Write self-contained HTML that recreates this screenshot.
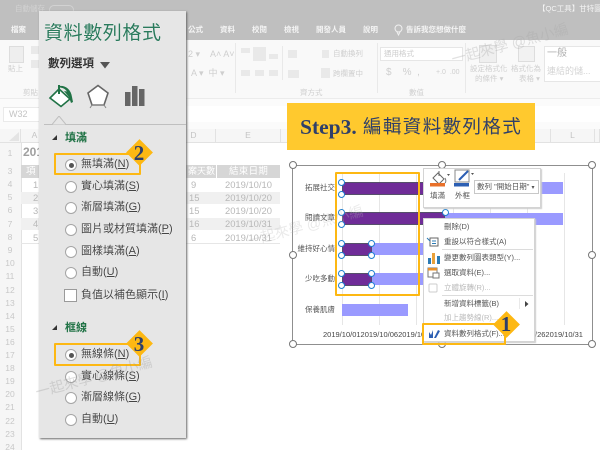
<!DOCTYPE html>
<html><head><meta charset="utf-8">
<style>
html,body{margin:0;padding:0;background:#fff}
#r{position:relative;width:600px;height:450px;overflow:hidden;background:#fff;font-family:"Liberation Sans","Noto Sans CJK TC",sans-serif}
#r div{position:absolute;white-space:nowrap}
.g{color:#f4f4f4;font-size:7.5px;line-height:12px;font-weight:bold}
.rb{color:#cfcfcf;font-size:7.5px;line-height:12px}
.sh{background:#e9e9e9}
.h{background:#f6f6f6;border-right:1px solid #e2e2e2;border-bottom:1px solid #e2e2e2;box-sizing:border-box;color:#c4c4c4;font-size:8.5px;text-align:center;line-height:13px}
.c{color:#b8b8b8;font-size:9.4px;line-height:13px}
.n{color:#c8c8c8;font-size:8.5px;width:20px;text-align:center;left:0;line-height:13px}
.o{color:#444;font-size:11px;line-height:15px;left:81px;text-shadow:0 0 1px #fff}
.rd{width:10px;height:10px;border:1px solid #a5a5a5;border-radius:50%;background:#fff;left:65px}
.rd.on:after{content:"";position:absolute;left:2.5px;top:2.5px;width:5px;height:5px;background:#555;border-radius:50%}
.y{border:2px solid #fdb813;box-sizing:border-box;border-radius:1px}
.d{width:19px;height:19px;background:#fdb813;transform:rotate(45deg)}
.num{color:#2f3f69;font:bold 21px/20px "Liberation Serif",serif;width:20px;text-align:center}
.m{color:#555;font-size:7.5px;line-height:12px;left:444px}
.ms{background:#dcdcdc;height:1px;left:442px;width:91px}
.p{background:#6f2c98;height:13px;border:1px solid #55506a;box-sizing:border-box}
.b{background:#9a9aff;height:12px}
.hd{width:5px;height:5px;border:1px solid #1f7fd0;background:#fff;border-radius:50%}
.ch{width:6px;height:6px;border:1px solid #777;background:#fff;border-radius:50%}
.gl{width:1px;background:#e6e6e6;top:173px;height:152px}
.lb{color:#555;font-size:7.5px;line-height:12px;text-align:right;width:41px;left:294px}
.ax{color:#444;font-size:7.5px;line-height:11px}
.wm{font-size:14.5px;line-height:20px;transform:rotate(-15deg)}
</style></head><body>
<div id="r">
<!-- title bar -->
<div style="left:0;top:0;width:600px;height:40px;background:#bfbfbf"></div>
<div class="g" style="left:15px;top:3px;color:#d2d2d2;font-weight:normal">自動儲存</div>
<div style="left:49px;top:5px;width:23px;height:8px;border:1px solid #d2d2d2;border-radius:5px"></div>
<div class="g" style="left:538px;top:3px;font-size:7.5px;font-weight:normal">【QC工具】甘特圖</div>
<div class="g" style="left:11px;top:24px">檔案</div>
<div class="g" style="left:188px;top:24px">公式</div>
<div class="g" style="left:220px;top:24px">資料</div>
<div class="g" style="left:252px;top:24px">校閱</div>
<div class="g" style="left:284px;top:24px">檢視</div>
<div class="g" style="left:316px;top:24px">開發人員</div>
<div class="g" style="left:363px;top:24px">說明</div>
<svg style="position:absolute;left:394px;top:24px" width="9" height="12"><circle cx="4.500" cy="4.500" r="3.500" fill="none" stroke="#f0f0f0"/><path d="M3 8l1.500 3L6 8" fill="none" stroke="#f0f0f0"/></svg>
<div class="g" style="left:406px;top:24px">告訴我您想做什麼</div>
<!-- ribbon -->
<div style="left:0;top:40px;width:600px;height:58px;background:#f9f9f9;border-bottom:1px solid #ececec"></div>
<div class="rb" style="left:8px;top:63px">貼上</div>
<div class="rb" style="left:23px;top:87px">剪貼</div>
<div style="left:9px;top:46px;width:13px;height:15px;background:#eee;border:1px solid #ddd"></div>
<div class="sh" style="left:31px;top:46px;width:8px;height:8px"></div>
<div class="sh" style="left:31px;top:60px;width:8px;height:8px"></div>
<div class="rb" style="left:188px;top:48px;font-size:9px">2 ▾</div>
<div class="rb" style="left:210px;top:48px;font-size:9px">A˄ A˅</div>
<div class="rb" style="left:191px;top:67px;font-size:9px">A ▾ &nbsp;中 ▾</div>
<div class="sh" style="left:241px;top:48px;width:9px;height:5px"></div><div class="sh" style="left:253px;top:47px;width:13px;height:14px"></div><div class="sh" style="left:269px;top:54px;width:9px;height:5px"></div>
<div class="sh" style="left:241px;top:70px;width:9px;height:6px"></div><div class="sh" style="left:255px;top:70px;width:9px;height:6px"></div><div class="sh" style="left:269px;top:70px;width:9px;height:6px"></div>
<div class="sh" style="left:235px;top:43px;width:1px;height:50px"></div>
<div class="sh" style="left:282px;top:46px;width:1px;height:34px"></div>
<div class="sh" style="left:377px;top:43px;width:1px;height:50px"></div>
<div class="sh" style="left:465px;top:43px;width:1px;height:50px"></div>
<div class="sh" style="left:288px;top:50px;width:9px;height:8px"></div><div class="sh" style="left:288px;top:70px;width:11px;height:8px"></div>
<div class="sh" style="left:322px;top:50px;width:7px;height:8px"></div><div class="sh" style="left:321px;top:68px;width:9px;height:10px"></div>
<div class="rb" style="left:300px;top:87px">齊方式</div>
<div class="rb" style="left:409px;top:87px">數值</div>
<div class="rb" style="left:333px;top:48px">自動換列</div>
<div class="rb" style="left:333px;top:68px">跨欄置中</div>
<div style="left:380px;top:47px;width:81px;height:12px;background:#fff;border:1px solid #e6e6e6;color:#ccc;font-size:7.5px;line-height:12px;text-indent:3px">通用格式</div>
<div class="rb" style="left:386px;top:67px;font-size:10px">$ &nbsp; &nbsp;% &nbsp;,</div>
<div class="rb" style="left:436px;top:67px;font-size:7px">+.0 &nbsp;.00</div>
<div class="rb" style="left:470px;top:63px">設定格式化</div>
<div class="rb" style="left:475px;top:73px">的條件 ▾</div>
<div class="rb" style="left:511px;top:63px">格式化為</div>
<div class="rb" style="left:519px;top:73px">表格 ▾</div>
<div style="left:479px;top:45px;width:16px;height:16px;background:#efefef;border:1px solid #ddd"></div>
<div style="left:518px;top:46px;width:15px;height:14px;background:#f2f2f2;border:1px solid #ddd"></div>
<div style="left:544px;top:46px;width:60px;height:34px;background:#fff;border:1px solid #e6e6e6"></div>
<div style="left:547px;top:47px;color:#b0b0b0;font-size:10px;line-height:14px">一般</div>
<div style="left:547px;top:64px;color:#d4d4d4;font-size:9px;line-height:14px">連結的儲...</div>
<div class="wm" style="left:450px;top:35px;color:rgba(170,170,170,.35)">一起來學 @魚小編</div>
<!-- formula bar -->
<div style="left:0;top:99px;width:600px;height:30px;background:#fbfbfb"></div>
<div style="left:3px;top:107px;width:36px;height:13px;background:#fff;border:1px solid #eaeaea;color:#c4c4c4;font-size:9px;line-height:13px;text-indent:5px">W32</div>
<div style="left:186px;top:106px;width:414px;height:16px;background:#fff"></div>
<!-- col headers -->
<div class="h" style="left:0;top:129px;width:21px;height:14px"></div>
<div class="h" style="left:21px;top:129px;width:28px;height:14px">A</div>
<div class="h" style="left:49px;top:129px;width:123px;height:14px"></div>
<div class="h" style="left:172px;top:129px;width:44px;height:14px">D</div>
<div class="h" style="left:216px;top:129px;width:65px;height:14px">E</div>
<div class="h" style="left:281px;top:129px;width:270px;height:14px"></div>
<div class="h" style="left:551px;top:129px;width:44px;height:14px">L</div>
<div class="h" style="left:595px;top:129px;width:5px;height:14px"></div>
<svg style="position:absolute;left:8px;top:131px" width="12" height="11"><path d="M11 1v9H1z" fill="#e4e4e4"/></svg>
<!-- row headers -->
<div style="left:0;top:143px;width:21px;height:307px;background:#f6f6f6;border-right:1px solid #e2e2e2"></div>
<div class="n" style="top:147px">1</div><div class="n" style="top:165px">3</div><div class="n" style="top:178px">4</div><div class="n" style="top:191px">5</div><div class="n" style="top:204px">6</div><div class="n" style="top:218px">7</div><div class="n" style="top:231px">8</div><div class="n" style="top:244px">9</div><div class="n" style="top:257px">10</div><div class="n" style="top:270px">11</div><div class="n" style="top:284px">12</div><div class="n" style="top:297px">13</div><div class="n" style="top:310px">14</div><div class="n" style="top:323px">15</div><div class="n" style="top:336px">16</div><div class="n" style="top:349px">17</div><div class="n" style="top:362px">18</div><div class="n" style="top:375px">19</div><div class="n" style="top:388px">20</div><div class="n" style="top:401px">21</div><div class="n" style="top:415px">22</div><div class="n" style="top:428px">23</div><div class="n" style="top:441px">24</div>
<!-- sheet -->
<div style="left:23px;top:144px;color:#a0a0a0;font-size:12px;font-weight:bold;line-height:16px">201</div>
<div style="left:21px;top:165px;width:259px;height:13px;background:#d6d6d6"></div>
<div style="left:216px;top:165px;width:1px;height:13px;background:#fff"></div>
<div style="left:188px;top:165px;color:#fff;font-size:9px;line-height:13px">案天數</div>
<div style="left:229px;top:165px;color:#fff;font-size:9.500px;line-height:13px;letter-spacing:.3px">結束日期</div>
<div style="left:26px;top:165px;color:#fff;font-size:9.500px;line-height:13px">項</div>
<div style="left:21px;top:192px;width:259px;height:12px;background:#f0f0f0"></div>
<div style="left:21px;top:218px;width:259px;height:12px;background:#f0f0f0"></div>
<div style="left:21px;top:243px;width:259px;height:1px;background:#e6e6e6"></div>
<div class="c" style="left:33px;top:178px">1</div><div class="c" style="left:33px;top:191px">2</div><div class="c" style="left:33px;top:204px">3</div><div class="c" style="left:33px;top:217px">4</div><div class="c" style="left:33px;top:231px">5</div>
<div class="c" style="left:191px;top:178px">9</div><div class="c" style="left:189px;top:191px">15</div><div class="c" style="left:189px;top:204px">15</div><div class="c" style="left:189px;top:217px">16</div><div class="c" style="left:191px;top:231px">6</div>
<div class="c" style="left:225px;top:178px">2019/10/10</div><div class="c" style="left:225px;top:191px">2019/10/20</div><div class="c" style="left:225px;top:204px">2019/10/20</div><div class="c" style="left:225px;top:217px">2019/10/31</div><div class="c" style="left:225px;top:231px">2019/10/31</div>
<!-- step banner -->
<div style="left:287px;top:103px;width:248px;height:47px;background:#ffc92e"></div>
<div style="left:300px;top:115px;color:#2f3f69;font-size:21.500px;line-height:24px;font-weight:bold;font-family:'Liberation Serif',serif">Step3.</div>
<div style="left:363px;top:115px;color:#2f3f69;font-size:18.500px;line-height:24px;letter-spacing:1.400px">編輯資料數列格式</div>
<!-- chart -->
<div style="left:292px;top:165px;width:301px;height:180px;background:#fff;border:1.500px solid #8f8f8f;box-sizing:border-box"></div>
<div class="gl" style="left:342px"></div><div class="gl" style="left:379px"></div><div class="gl" style="left:416px"></div><div class="gl" style="left:453px"></div><div class="gl" style="left:490px"></div><div class="gl" style="left:527px"></div><div class="gl" style="left:564px"></div>
<div class="lb" style="top:182px">拓展社交</div><div class="lb" style="top:212px">閱讀文章</div><div class="lb" style="top:243px">維持好心情</div><div class="lb" style="top:273px">少吃多動</div><div class="lb" style="top:304px">保養肌膚</div>
<div class="b" style="left:342px;top:182px;width:221px"></div>
<div class="b" style="left:342px;top:213px;width:221px"></div>
<div class="b" style="left:342px;top:243px;width:140px"></div>
<div class="b" style="left:342px;top:273px;width:140px"></div>
<div class="b" style="left:342px;top:304px;width:66px"></div>
<div class="p" style="left:342px;top:182px;width:103px"></div>
<div class="p" style="left:342px;top:212px;width:103px"></div>
<div class="p" style="left:342px;top:243px;width:30px"></div>
<div class="p" style="left:342px;top:273px;width:30px"></div>
<div class="ax" style="left:323px;top:329px">2019/10/012019/10/062019/10/11</div>
<div class="ax" style="left:535px;top:329px">/262019/10/31</div>
<div class="hd" style="left:338px;top:179px"></div><div class="hd" style="left:338px;top:191px"></div>
<div class="hd" style="left:338px;top:209px"></div><div class="hd" style="left:338px;top:221px"></div><div class="hd" style="left:442px;top:209px"></div>
<div class="hd" style="left:338px;top:240px"></div><div class="hd" style="left:338px;top:252px"></div><div class="hd" style="left:368px;top:240px"></div><div class="hd" style="left:368px;top:252px"></div>
<div class="hd" style="left:338px;top:270px"></div><div class="hd" style="left:338px;top:282px"></div><div class="hd" style="left:368px;top:270px"></div><div class="hd" style="left:368px;top:282px"></div>
<div class="ch" style="left:289px;top:161px"></div><div class="ch" style="left:438px;top:161px"></div><div class="ch" style="left:588px;top:161px"></div>
<div class="ch" style="left:289px;top:251px"></div><div class="ch" style="left:588px;top:251px"></div>
<div class="ch" style="left:289px;top:340px"></div><div class="ch" style="left:438px;top:340px"></div><div class="ch" style="left:588px;top:340px"></div>
<!-- mini toolbar -->
<div style="left:423px;top:168px;width:118px;height:40px;background:#fff;border:1px solid #d4d4d4;box-shadow:1px 1px 1px #ccc;box-sizing:border-box"></div>
<svg style="position:absolute;left:430px;top:169px" width="45" height="24" viewBox="0 0 45 24"><path d="M3 9 L8 4 L14 10 L9 15 Z" fill="#fff" stroke="#666" stroke-width="1"/><path d="M9 2v5" stroke="#666"/><path d="M15 9c1 2 1 4 0 5" stroke="#777" fill="none"/><rect x="0" y="14" width="15" height="3.500" fill="#e8702a"/><path d="M17 5h3l-1.500 2z" fill="#555"/><rect x="25" y="1" width="14" height="12" fill="#fff" stroke="#888"/><path d="M29 11L38 2" stroke="#2c5fb3" stroke-width="2"/><rect x="24" y="14" width="15" height="3.500" fill="#2c5fb3"/><path d="M41 4h3l-1.500 2z" fill="#555"/></svg>
<div class="m" style="left:430px;top:190px">填滿</div>
<div class="m" style="left:455px;top:190px">外框</div>
<div style="left:474px;top:180px;width:65px;height:14px;background:#fff;border:1px solid #c8c8c8;box-sizing:border-box;color:#555;font-size:7.500px;line-height:12px;text-indent:2px">數列 "開始日期" <span style="font-size:6px">▾</span></div>
<!-- context menu -->
<div style="left:423px;top:218px;width:112px;height:124px;background:#fff;border:1px solid #d4d4d4;box-shadow:1px 1px 1px #ccc;box-sizing:border-box"></div>
<div class="m" style="top:221px">刪除(D)</div>
<div class="m" style="top:236px">重設以符合樣式(A)</div>
<div class="ms" style="top:249px"></div>
<div class="m" style="top:252px">變更數列圖表類型(Y)...</div>
<div class="m" style="top:267px">選取資料(E)...</div>
<div class="m" style="top:282px;color:#bbb">立體旋轉(R)...</div>
<div class="ms" style="top:295px"></div>
<div class="m" style="top:298px">新增資料標籤(B)</div>
<div class="sh" style="left:519px;top:298px;width:1px;height:11px"></div>
<svg style="position:absolute;left:525px;top:301px" width="4" height="6"><path d="M0 0l3.500 3L0 6z" fill="#444"/></svg>
<div class="m" style="top:312px;color:#bbb">加上趨勢線(R)...</div>
<div class="m" style="top:328px">資料數列格式(F)...</div>
<svg style="position:absolute;left:426px;top:234px" width="16" height="112" viewBox="0 0 16 112"><rect x="4" y="4" width="8" height="8" fill="#fff" stroke="#666"/><path d="M1 4l3 3M6 7h4M6 9.500h4" stroke="#2c7bb5"/><rect x="2" y="24" width="3" height="6" fill="#2c7bb5"/><rect x="6" y="19" width="3" height="11" fill="#e9a13b"/><rect x="11" y="22" width="3" height="8" fill="#2c7bb5"/><rect x="2" y="34" width="9" height="9" fill="#fff" stroke="#777"/><rect x="2" y="34" width="9" height="2.500" fill="#e8902a"/><rect x="7" y="39" width="6" height="5" fill="#fff" stroke="#777"/><rect x="3" y="50" width="8" height="8" rx="1" fill="#fff" stroke="#ccc"/><path d="M3 104v-6l2 3 2-5v8zM8 104l4-8 2 1-4 7z" fill="#2c5fb3"/></svg>
<!-- highlight boxes -->
<div class="y" style="left:335px;top:172px;width:85px;height:124px"></div>
<div class="y" style="left:422px;top:323px;width:84px;height:22px"></div>
<div class="d" style="left:497px;top:315px"></div>
<div class="num" style="left:496px;top:314px">1</div>
<div class="wm" style="left:245px;top:217px;color:rgba(185,185,185,.3)">一起來學 @魚小編</div>
<!-- side panel -->
<div style="left:39px;top:11px;width:147px;height:427px;background:#e6e6e6;box-shadow:1px 1px 2px #666"></div>
<div style="left:44px;top:21px;color:#2a7a5c;font-size:19px;line-height:26px;letter-spacing:.6px;text-shadow:0 0 1px #fff">資料數列格式</div>
<div style="left:48px;top:56px;color:#333;font-size:11.500px;line-height:16px;font-weight:bold">數列選項</div>
<svg style="position:absolute;left:100px;top:62px" width="10" height="7"><path d="M0 0h10L5 6.500z" fill="#555"/></svg>
<svg style="position:absolute;left:45px;top:81px" width="105" height="30" viewBox="0 0 105 30"><path d="M5 17 L14 8 L25 18 L16 25.500 Z" fill="#fff" stroke="#217346" stroke-width="1.600"/><path d="M13 4h2v9h-2z" fill="#217346"/><path d="M14 5c6-1 12 3 13 11l1 5-2 1-2-6-5-6 3 .5c-2-3-5-4-8-4z" fill="#217346"/><path d="M43 12l10-7.500 10 7.500-4 12H47z" fill="#fff" stroke="#666" stroke-width="1.600"/><path d="M45 27l2-3h12l2 3" fill="none" stroke="#888"/><rect x="80" y="11" width="5.500" height="14" fill="#666"/><rect x="87" y="5" width="5.500" height="20" fill="#666"/><rect x="94" y="8" width="5.500" height="17" fill="#666"/></svg>
<div style="left:44px;top:124px;width:142px;height:1px;background:#bfbfbf"></div>
<svg style="position:absolute;left:52px;top:116px" width="14" height="9"><path d="M0 8.500L7 0l7 8.500" fill="#e6e6e6" stroke="#bfbfbf"/></svg>
<svg style="position:absolute;left:51px;top:134px" width="7" height="7"><path d="M6 1v5H1z" fill="#333"/></svg>
<div style="left:65px;top:130px;color:#217346;font-size:11px;line-height:16px;font-weight:bold">填滿</div>
<div class="rd on" style="top:159px"></div><div class="o" style="top:157px">無填滿(<u>N</u>)</div>
<div class="rd" style="top:181px"></div><div class="o" style="top:179px">實心填滿(<u>S</u>)</div>
<div class="rd" style="top:202px"></div><div class="o" style="top:200px">漸層填滿(<u>G</u>)</div>
<div class="rd" style="top:224px"></div><div class="o" style="top:222px">圖片或材質填滿(<u>P</u>)</div>
<div class="rd" style="top:246px"></div><div class="o" style="top:244px">圖樣填滿(<u>A</u>)</div>
<div class="rd" style="top:267px"></div><div class="o" style="top:265px">自動(<u>U</u>)</div>
<div style="left:64px;top:289px;width:11px;height:11px;border:1px solid #9a9a9a;background:#fff"></div><div class="o" style="top:288px">負值以補色顯示(<u>I</u>)</div>
<svg style="position:absolute;left:51px;top:324px" width="7" height="7"><path d="M6 1v5H1z" fill="#333"/></svg>
<div style="left:65px;top:320px;color:#217346;font-size:11px;line-height:16px;font-weight:bold">框線</div>
<div class="rd on" style="top:349px"></div><div class="o" style="top:347px">無線條(<u>N</u>)</div>
<div class="rd" style="top:371px"></div><div class="o" style="top:369px">實心線條(<u>S</u>)</div>
<div class="rd" style="top:392px"></div><div class="o" style="top:390px">漸層線條(<u>G</u>)</div>
<div class="rd" style="top:414px"></div><div class="o" style="top:412px">自動(<u>U</u>)</div>
<!-- panel highlights -->
<div class="y" style="left:54px;top:153px;width:87px;height:22px"></div>
<div class="d" style="left:130px;top:143px"></div>
<div class="num" style="left:129px;top:143px">2</div>
<div class="y" style="left:54px;top:343px;width:87px;height:23px"></div>
<div class="d" style="left:130px;top:334px"></div>
<div class="num" style="left:129px;top:334px">3</div>
<div class="wm" style="left:34px;top:368px;color:rgba(150,150,150,.3)">一起來學 @魚小編</div>
</div>
</body></html>
